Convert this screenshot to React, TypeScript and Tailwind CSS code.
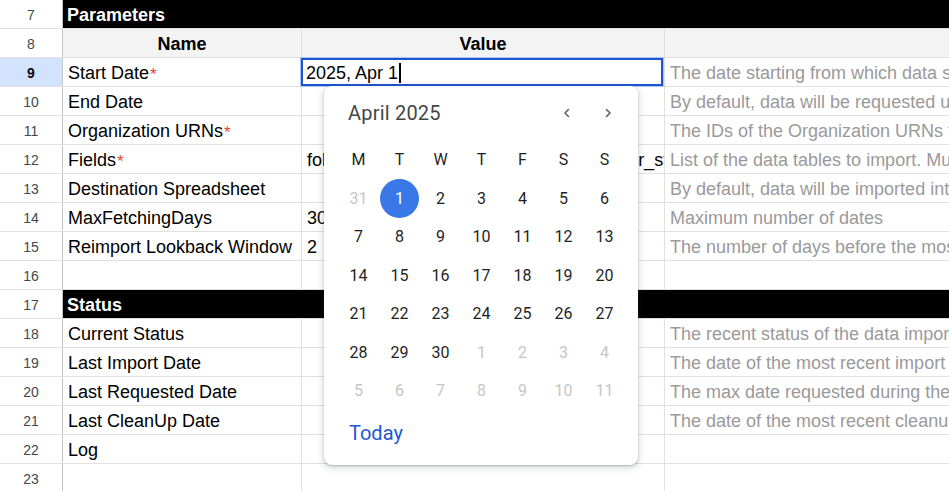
import { ReactNode } from 'react';

type Row =
  | { n: number; kind: 'section'; label: string }
  | { n: number; kind: 'header' }
  | { n: number; kind: 'data'; a?: string; req?: boolean; b?: string; c?: string };

const rows: Row[] = [
  { n: 7, kind: 'section', label: 'Parameters' },
  { n: 8, kind: 'header' },
  { n: 9, kind: 'data', a: 'Start Date', req: true, c: 'The date starting from which data should be imported' },
  { n: 10, kind: 'data', a: 'End Date', c: 'By default, data will be requested until yesterday' },
  { n: 11, kind: 'data', a: 'Organization URNs', req: true, c: 'The IDs of the Organization URNs to import' },
  { n: 12, kind: 'data', a: 'Fields', req: true, b: 'follower_statistics,shared_statistics,viewer_statistics', c: 'List of the data tables to import. Multiple values allowed' },
  { n: 13, kind: 'data', a: 'Destination Spreadsheet', c: 'By default, data will be imported into this spreadsheet' },
  { n: 14, kind: 'data', a: 'MaxFetchingDays', b: '30', c: 'Maximum number of dates' },
  { n: 15, kind: 'data', a: 'Reimport Lookback Window', b: '2', c: 'The number of days before the most recent import' },
  { n: 16, kind: 'data' },
  { n: 17, kind: 'section', label: 'Status' },
  { n: 18, kind: 'data', a: 'Current Status', c: 'The recent status of the data import' },
  { n: 19, kind: 'data', a: 'Last Import Date', c: 'The date of the most recent import' },
  { n: 20, kind: 'data', a: 'Last Requested Date', c: 'The max date requested during the last import' },
  { n: 21, kind: 'data', a: 'Last CleanUp Date', c: 'The date of the most recent cleanup' },
  { n: 22, kind: 'data', a: 'Log' },
  { n: 23, kind: 'data' },
];

const weekDays = ['M', 'T', 'W', 'T', 'F', 'S', 'S'];

// April 2025 starts on a Tuesday; padded with March 31 and May 1-11
const days: { d: number; muted?: boolean }[] = [
  { d: 31, muted: true },
  ...Array.from({ length: 30 }, (_, i) => ({ d: i + 1 })),
  ...Array.from({ length: 11 }, (_, i) => ({ d: i + 1, muted: true })),
];

function RowHeader({ n }: { n: number }) {
  const selected = n === 9;
  return (
    <div
      className={
        'w-[63px] shrink-0 h-full flex items-center justify-center pt-[3px] border-r border-[#c4c7c5] text-[14px] ' +
        (selected ? 'bg-[#d3e3fd] text-[#0b0b0b] font-bold' : 'bg-white text-[#444746]')
      }
    >
      {n}
    </div>
  );
}

function Cell({ className = '', children }: { className?: string; children?: ReactNode }) {
  return (
    <div className={'h-full flex items-center pt-[3px] whitespace-nowrap border-r border-[#e1e1e1] ' + className}>
      {children}
    </div>
  );
}

function Chevron({ dir }: { dir: 'left' | 'right' }) {
  return (
    <svg width="12" height="12" viewBox="0 0 12 12" fill="none">
      <path
        d={dir === 'left' ? 'M7.5 2.5 L4 6 L7.5 9.5' : 'M4.5 2.5 L8 6 L4.5 9.5'}
        stroke="#5f6368"
        strokeWidth="1.6"
        strokeLinecap="round"
        strokeLinejoin="round"
      />
    </svg>
  );
}

function DatePicker() {
  return (
    <div
      className="absolute left-[324px] top-[86px] w-[314px] h-[379px] bg-white rounded-[8px] shadow-[0_2px_6px_2px_rgba(60,64,67,0.15),0_1px_2px_rgba(60,64,67,0.3)] z-20"
      style={{ fontFamily: 'Roboto, "Noto Sans", sans-serif' }}
    >
      <div className="h-[55px] flex items-center pb-[1px] pl-[24px] pr-[24px]">
        <div className="flex-1 text-[20px] text-[#444746] tracking-[0.2px]">April 2025</div>
        <div className="flex items-center gap-[29px]">
          <Chevron dir="left" />
          <Chevron dir="right" />
        </div>
      </div>
      <div className="grid grid-cols-[repeat(7,41px)] auto-rows-[38.5px] pl-[14px]">
        {weekDays.map((w, i) => (
          <div key={'w' + i} className="flex items-center justify-center text-[16px] text-[#1f1f1f]">
            {w}
          </div>
        ))}
        {days.map((day, i) => {
          const selected = !day.muted && day.d === 1;
          return (
            <div key={i} className="flex items-center justify-center">
              <div
                className={
                  'w-[39px] h-[39px] rounded-full flex items-center justify-center text-[16px] ' +
                  (selected
                    ? 'bg-[#3b78e7] text-white'
                    : day.muted
                      ? 'text-[#c4c7c5]'
                      : 'text-[#1f1f1f]')
                }
              >
                {day.d}
              </div>
            </div>
          );
        })}
      </div>
      <div className="h-[44px] flex items-center pl-[25px] text-[20px] text-[#1f57d6]">Today</div>
    </div>
  );
}

export default function App() {
  return (
    <div
      className="relative w-[949px] h-[491px] overflow-hidden bg-white text-[18px] text-black"
      style={{ fontFamily: '"Liberation Sans", Arial, sans-serif' }}
    >
      {rows.map((row) => (
        <div key={row.n} className="flex h-[29px] border-b border-[#e1e1e1]">
          <RowHeader n={row.n} />
          {row.kind === 'section' && (
            <div className="flex-1 h-full bg-black text-white font-bold flex items-center pt-[3px] pl-[4px]">
              {row.label}
            </div>
          )}
          {row.kind === 'header' && (
            <>
              <Cell className="w-[239px] shrink-0 bg-[#f3f3f3] justify-center font-bold">Name</Cell>
              <Cell className="w-[363px] shrink-0 bg-[#f3f3f3] justify-center font-bold">Value</Cell>
              <div className="flex-1 h-full bg-[#f3f3f3]" />
            </>
          )}
          {row.kind === 'data' && (
            <>
              <Cell className="w-[239px] shrink-0 pl-[5px] overflow-hidden">
                {row.a}
                {row.req && <span className="text-[#ea4335] text-[17px] self-start mt-[1px] ml-[1px]">*</span>}
              </Cell>
              <Cell className="relative w-[363px] shrink-0 pl-[5px]">
                <span className="overflow-hidden">{row.b}</span>
                {row.n === 9 && (
                  <div className="absolute -left-[2px] -top-[1px] right-0 -bottom-[1px] border border-[#a8c7fa] z-10">
                    <div className="w-full h-full border-2 border-[#1f53d1] bg-white flex items-center pt-[2px] pl-[3px]">
                      <span>2025, Apr 1</span>
                      <span className="inline-block w-[1.5px] h-[20px] bg-black ml-[1px]" />
                    </div>
                  </div>
                )}
              </Cell>
              <div className="flex-1 h-full flex items-center pt-[3px] overflow-hidden whitespace-nowrap pl-[5px] text-[#9a9a9a]">
                {row.c}
              </div>
            </>
          )}
        </div>
      ))}
      <DatePicker />
    </div>
  );
}
